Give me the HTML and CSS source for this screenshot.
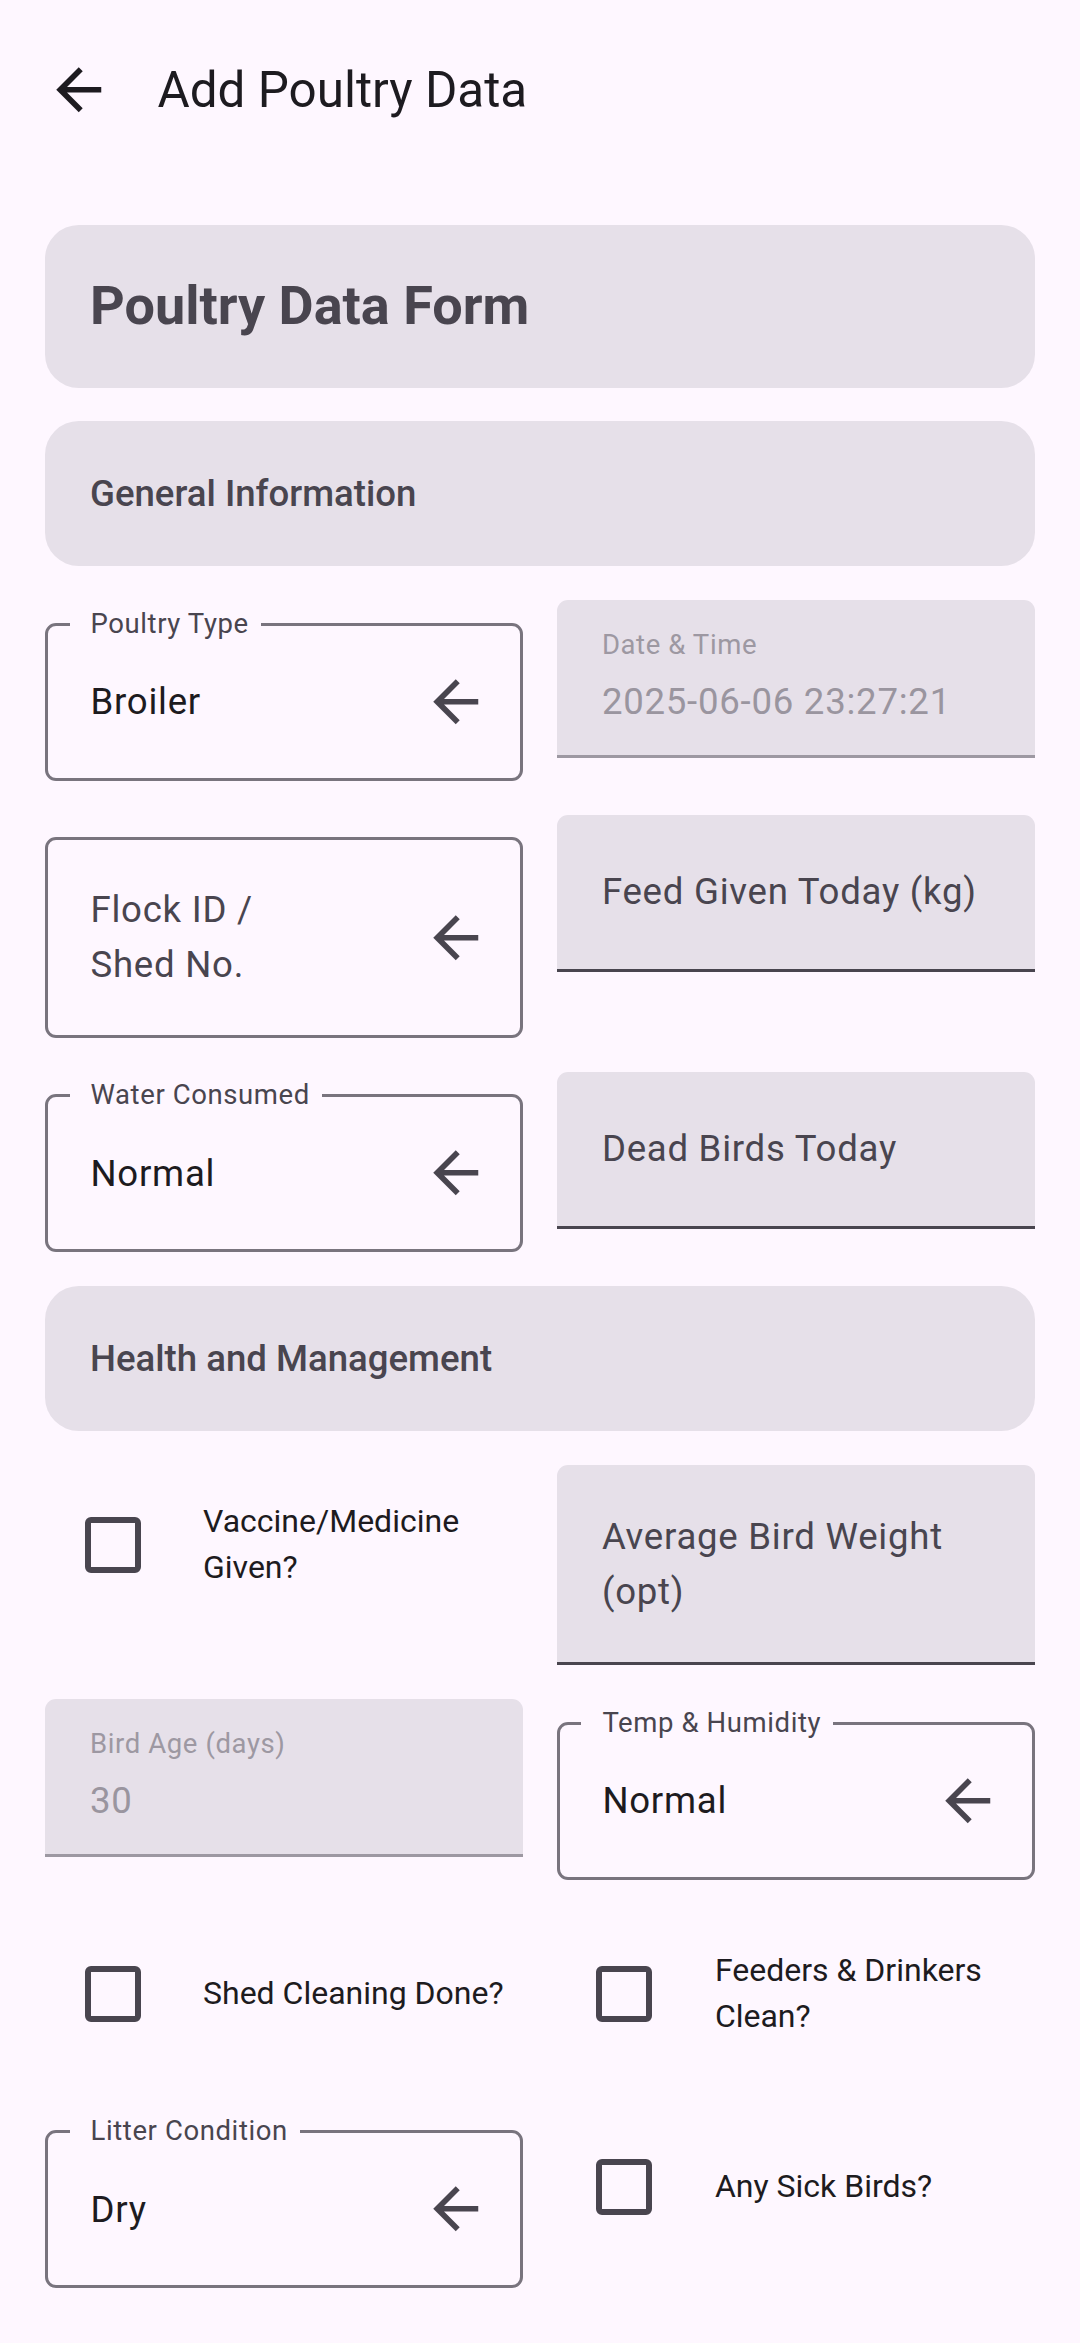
FILE: index.html
```html
<!DOCTYPE html>
<html lang="en">
<head>
<meta charset="utf-8">
<title>Add Poultry Data</title>
<link rel="stylesheet" href="styles.css">
</head>
<body>
<header class="topbar">
  <button class="icon-btn" aria-label="Back">
    <svg class="icon" viewBox="0 0 24 24"><path d="M20 11H7.83l5.59-5.59L12 4l-8 8 8 8 1.41-1.41L7.83 13H20v-2z"/></svg>
  </button>
  <h1 class="title">Add Poultry Data</h1>
</header>

<main class="content">
  <section class="card card-hero"><h2 class="hero-text">Poultry Data Form</h2></section>
  <section class="card card-section"><h3 class="section-text">General Information</h3></section>

  <div class="row">
    <div class="ofield">
      <div class="obox">
        <span class="olabel">Poultry Type</span>
        <span class="ovalue">Broiler</span>
        <span class="trail"><svg class="icon" viewBox="0 0 24 24"><path d="M20 11H7.83l5.59-5.59L12 4l-8 8 8 8 1.41-1.41L7.83 13H20v-2z"/></svg></span>
      </div>
    </div>
    <div class="ffield labeled disabled">
      <span class="flabel">Date &amp; Time</span>
      <span class="fvalue">2025-06-06 23:27:21</span>
    </div>
  </div>

  <div class="row">
    <div class="ofield">
      <div class="obox">
        <span class="ovalue placeholder">Flock ID /<br>Shed No.</span>
        <span class="trail"><svg class="icon" viewBox="0 0 24 24"><path d="M20 11H7.83l5.59-5.59L12 4l-8 8 8 8 1.41-1.41L7.83 13H20v-2z"/></svg></span>
      </div>
    </div>
    <div class="ffield">
      <span class="fplaceholder">Feed Given Today (kg)</span>
    </div>
  </div>

  <div class="row">
    <div class="ofield">
      <div class="obox">
        <span class="olabel">Water Consumed</span>
        <span class="ovalue">Normal</span>
        <span class="trail"><svg class="icon" viewBox="0 0 24 24"><path d="M20 11H7.83l5.59-5.59L12 4l-8 8 8 8 1.41-1.41L7.83 13H20v-2z"/></svg></span>
      </div>
    </div>
    <div class="ffield">
      <span class="fplaceholder">Dead Birds Today</span>
    </div>
  </div>

  <section class="card card-section"><h3 class="section-text">Health and Management</h3></section>

  <div class="row">
    <label class="check">
      <span class="cb-wrap"><span class="cb"></span></span>
      <span class="cb-text">Vaccine/Medicine Given?</span>
    </label>
    <div class="ffield">
      <span class="fplaceholder">Average Bird Weight<br>(opt)</span>
    </div>
  </div>

  <div class="row">
    <div class="ffield labeled disabled">
      <span class="flabel">Bird Age (days)</span>
      <span class="fvalue">30</span>
    </div>
    <div class="ofield">
      <div class="obox">
        <span class="olabel">Temp &amp; Humidity</span>
        <span class="ovalue">Normal</span>
        <span class="trail"><svg class="icon" viewBox="0 0 24 24"><path d="M20 11H7.83l5.59-5.59L12 4l-8 8 8 8 1.41-1.41L7.83 13H20v-2z"/></svg></span>
      </div>
    </div>
  </div>

  <div class="row">
    <label class="check">
      <span class="cb-wrap"><span class="cb"></span></span>
      <span class="cb-text">Shed Cleaning Done?</span>
    </label>
    <label class="check">
      <span class="cb-wrap"><span class="cb"></span></span>
      <span class="cb-text">Feeders &amp; Drinkers Clean?</span>
    </label>
  </div>

  <div class="row">
    <div class="ofield">
      <div class="obox">
        <span class="olabel">Litter Condition</span>
        <span class="ovalue">Dry</span>
        <span class="trail"><svg class="icon" viewBox="0 0 24 24"><path d="M20 11H7.83l5.59-5.59L12 4l-8 8 8 8 1.41-1.41L7.83 13H20v-2z"/></svg></span>
      </div>
    </div>
    <label class="check">
      <span class="cb-wrap"><span class="cb"></span></span>
      <span class="cb-text">Any Sick Birds?</span>
    </label>
  </div>
</main>
</body>
</html>
```

FILE: styles.css
```css
* { box-sizing: border-box; }

html, body {
  margin: 0;
  padding: 0;
  background: #FEF7FF;
}

body {
  width: 1080px;
  min-height: 2343px;
  font-family: Roboto, "Noto Sans", "Liberation Sans", sans-serif;
  color: #1D1B20;
}

/* Top app bar */
.topbar {
  height: 180px;
  display: flex;
  align-items: center;
}

.icon-btn {
  width: 135px;
  height: 135px;
  margin-left: 11px;
  padding: 0;
  border: 0;
  background: transparent;
  display: flex;
  align-items: center;
  justify-content: center;
  color: #1D1B20;
}

.icon {
  width: 67.5px;
  height: 67.5px;
  display: block;
  fill: currentColor;
}

.title {
  margin: 0 0 0 11.5px;
  font-size: 49.4px;
  line-height: 64px;
  font-weight: 400;
  color: #1D1B20;
}

/* Content */
.content {
  padding: 45px;
  display: flex;
  flex-direction: column;
  gap: 33.75px;
}

.card {
  background: #E6E0E9;
  border-radius: 33.75px;
  padding: 45px;
}

.hero-text {
  margin: 0;
  font-size: 54px;
  line-height: 72.5px;
  font-weight: 700;
  color: #49454F;
}

.section-text {
  margin: 0;
  font-size: 36.6px;
  line-height: 55px;
  font-weight: 500;
  letter-spacing: 0;
  color: #49454F;
}

.row {
  display: grid;
  grid-template-columns: 1fr 1fr;
  column-gap: 33.75px;
  align-items: start;
}

/* Outlined field */
.ofield {
  padding-top: 22.5px;
}

.obox {
  position: relative;
  border: 3px solid #79747E;
  border-radius: 11px;
  min-height: 157.5px;
  padding: 42.4px 0 42.4px 42.5px;
  display: flex;
  align-items: center;
}

.olabel {
  position: absolute;
  top: -19.8px;
  left: 21.5px;
  padding: 0 12px 0 21px;
  background: #FEF7FF;
  font-size: 27.5px;
  line-height: 36.6px;
  letter-spacing: 0.6px;
  color: #49454F;
  white-space: nowrap;
}

.ovalue {
  flex: 1;
  font-size: 36.6px;
  line-height: 55px;
  letter-spacing: 0.75px;
  color: #1D1B20;
}

.ovalue.placeholder {
  color: #49454F;
}

.trail {
  flex: none;
  width: 129px;
  display: flex;
  align-items: center;
  justify-content: center;
  color: #49454F;
}

/* Filled field */
.ffield {
  background: #E6E0E9;
  border-radius: 11px 11px 0 0;
  border-bottom: 3px solid #49454F;
  min-height: 157.5px;
  padding: 43.75px 45px;
  display: flex;
  flex-direction: column;
  justify-content: center;
}

.ffield.labeled {
  justify-content: flex-start;
  padding-top: 27px;
  padding-bottom: 0;
}

.ffield.disabled {
  border-bottom-color: #9D98A2;
}

.flabel {
  font-size: 27.5px;
  line-height: 36.6px;
  letter-spacing: 0.6px;
  color: #9D98A2;
}

.fvalue {
  margin-top: 10px;
  font-size: 36.6px;
  line-height: 55px;
  letter-spacing: 0.75px;
  color: #9A959F;
}

.fplaceholder {
  font-size: 36.6px;
  line-height: 55px;
  letter-spacing: 0.75px;
  color: #49454F;
}

/* Checkbox */
.check {
  display: flex;
  align-items: center;
  min-height: 160px;
}

.cb-wrap {
  flex: none;
  width: 135px;
  height: 135px;
  display: flex;
  align-items: center;
  justify-content: center;
}

.cb {
  width: 56px;
  height: 56px;
  border: 6px solid #49454F;
  border-radius: 6px;
}

.cb-text {
  margin-left: 23px;
  font-size: 32px;
  line-height: 45.8px;
  letter-spacing: 0;
  color: #1D1B20;
}
```
